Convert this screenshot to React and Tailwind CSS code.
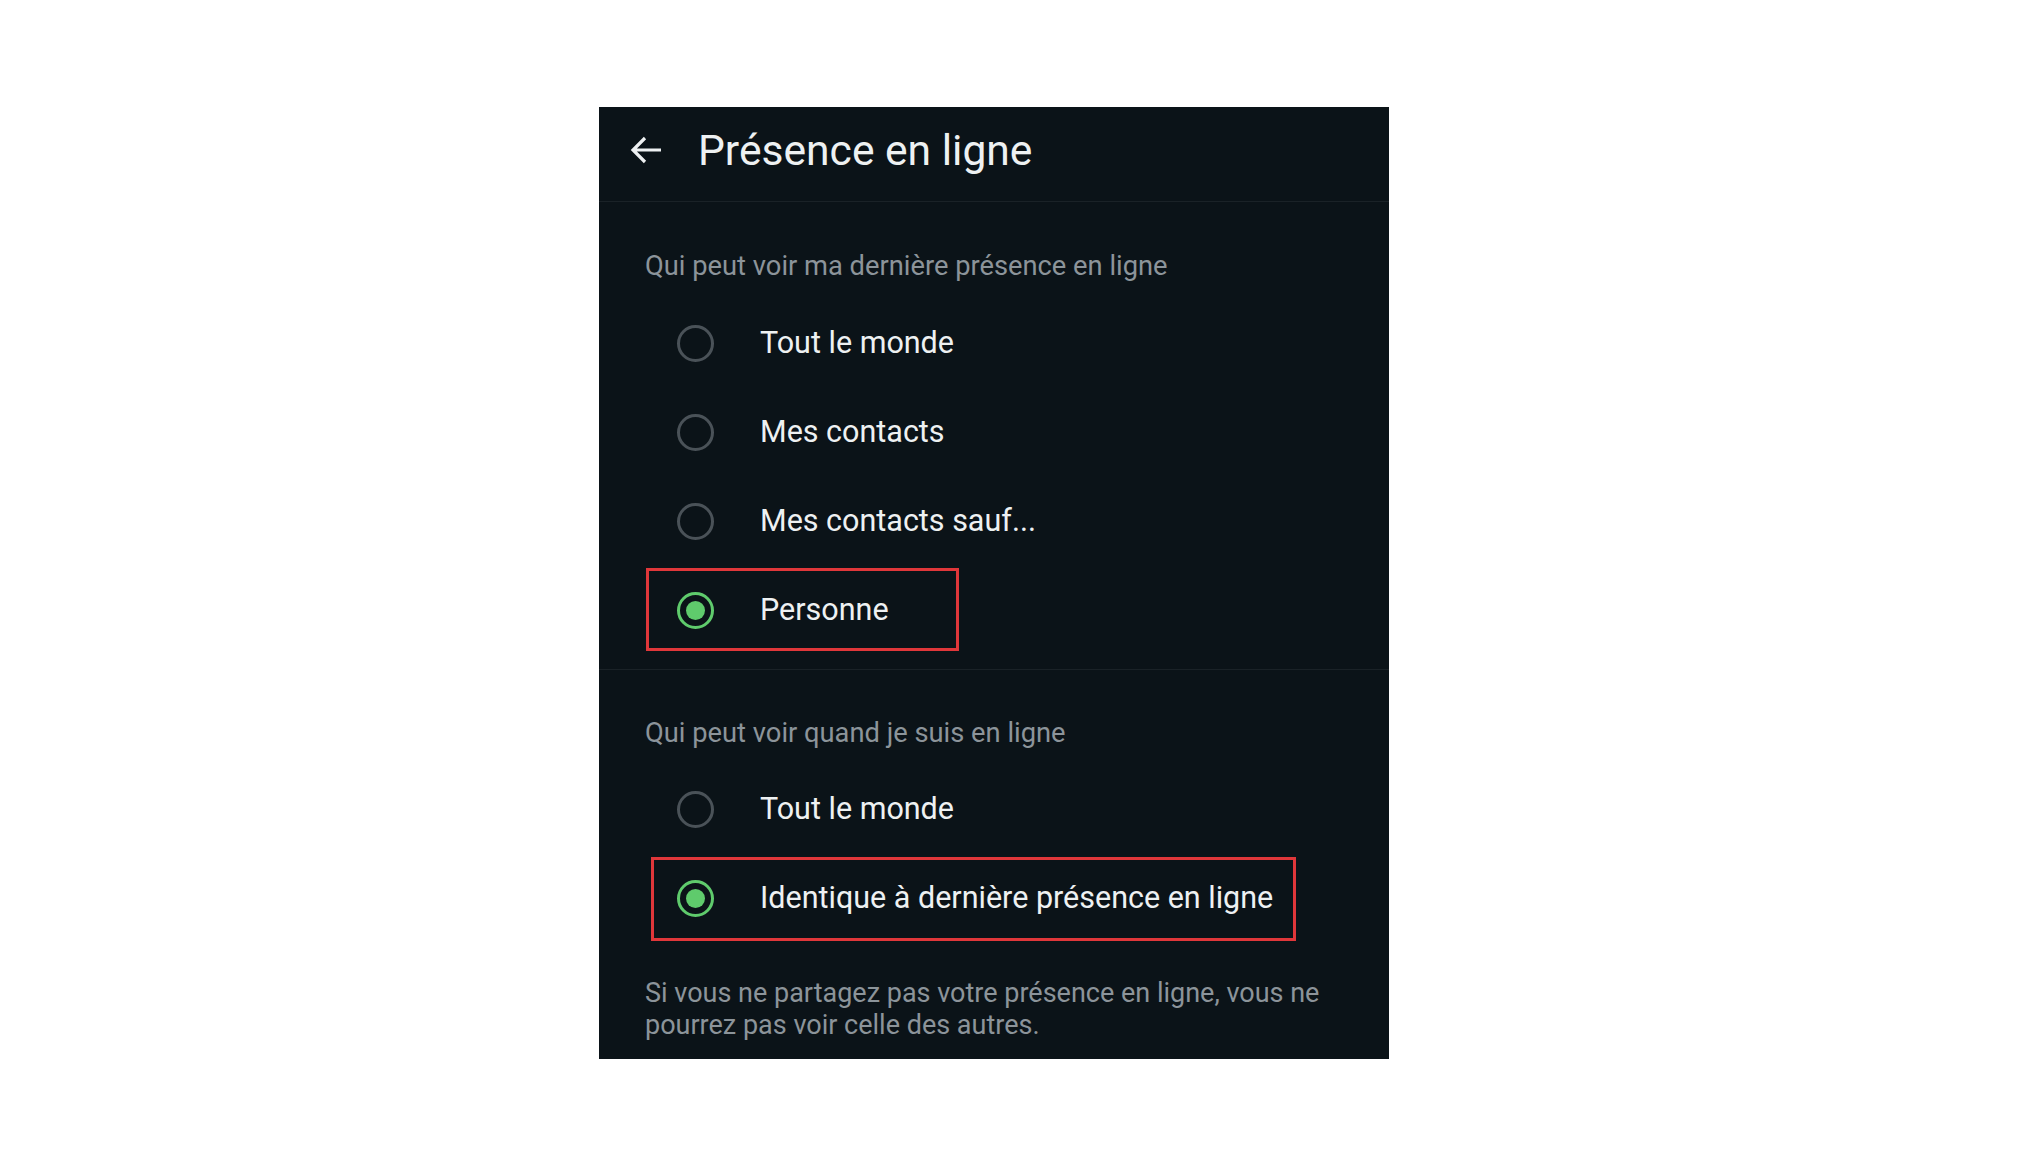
import React from "react";

const Radio = ({ checked }) =>
  checked ? (
    <div className="w-[37px] h-[37px] rounded-full border-[3px] border-[#5fcb6c] flex items-center justify-center shrink-0">
      <div className="w-[19px] h-[19px] rounded-full bg-[#5fcb6c]" />
    </div>
  ) : (
    <div className="w-[37px] h-[37px] rounded-full border-[3px] border-[#4a5258] shrink-0" />
  );

const Option = ({ label, checked, box }) => (
  <div className="relative h-[89px] flex items-center pl-[78px]">
    {box && (
      <div
        className={`absolute border-[3px] border-[#e0373a] pointer-events-none ${box}`}
      />
    )}
    <Radio checked={checked} />
    <span className="ml-[46px] text-[30.5px] text-[#eef1f2] leading-none">
      {label}
    </span>
  </div>
);

const SectionLabel = ({ children }) => (
  <p className="px-[46px] text-[27.3px] leading-[32px] text-[#8c949a]">
    {children}
  </p>
);

export default function App() {
  return (
    <div
      className="min-h-screen bg-white pt-[107px] pl-[599px]"
      style={{ fontFamily: "Roboto, 'Noto Sans', sans-serif" }}
    >
      <div className="w-[790px] h-[952px] bg-[#0b1318] flex flex-col">
        {/* Header */}
        <div className="h-[95px] pb-[8px] flex items-center pl-[30px] border-b border-[#1a2227]">
          <svg width="34" height="30" viewBox="0 0 34 30" fill="none">
            <path
              d="M32 15H4M16 3L4 15l12 12"
              stroke="#eef1f2"
              strokeWidth="3.2"
            />
          </svg>
          <h1 className="ml-[35px] text-[42.6px] text-[#eef1f2] leading-none">
            Présence en ligne
          </h1>
        </div>

        {/* Dernière présence */}
        <div className="pt-[48px] pb-[14px] border-b border-[#1a2227]">
          <SectionLabel>Qui peut voir ma dernière présence en ligne</SectionLabel>
          <div className="mt-[17px]">
            <Option label="Tout le monde" />
            <Option label="Mes contacts" />
            <Option label="Mes contacts sauf..." />
            <Option
              label="Personne"
              checked
              box="left-[47px] top-[2px] w-[313px] h-[83px]"
            />
          </div>
        </div>

        {/* En ligne */}
        <div className="pt-[47px]">
          <SectionLabel>Qui peut voir quand je suis en ligne</SectionLabel>
          <div className="mt-[16px]">
            <Option label="Tout le monde" />
            <Option
              label="Identique à dernière présence en ligne"
              checked
              box="left-[52px] top-[3px] w-[645px] h-[84px]"
            />
          </div>
          <p className="mt-[34px] pl-[46px] w-[746px] text-[27px] leading-[32px] text-[#8c949a]">
            Si vous ne partagez pas votre présence en ligne, vous ne pourrez pas
            voir celle des autres.
          </p>
        </div>
      </div>
    </div>
  );
}
